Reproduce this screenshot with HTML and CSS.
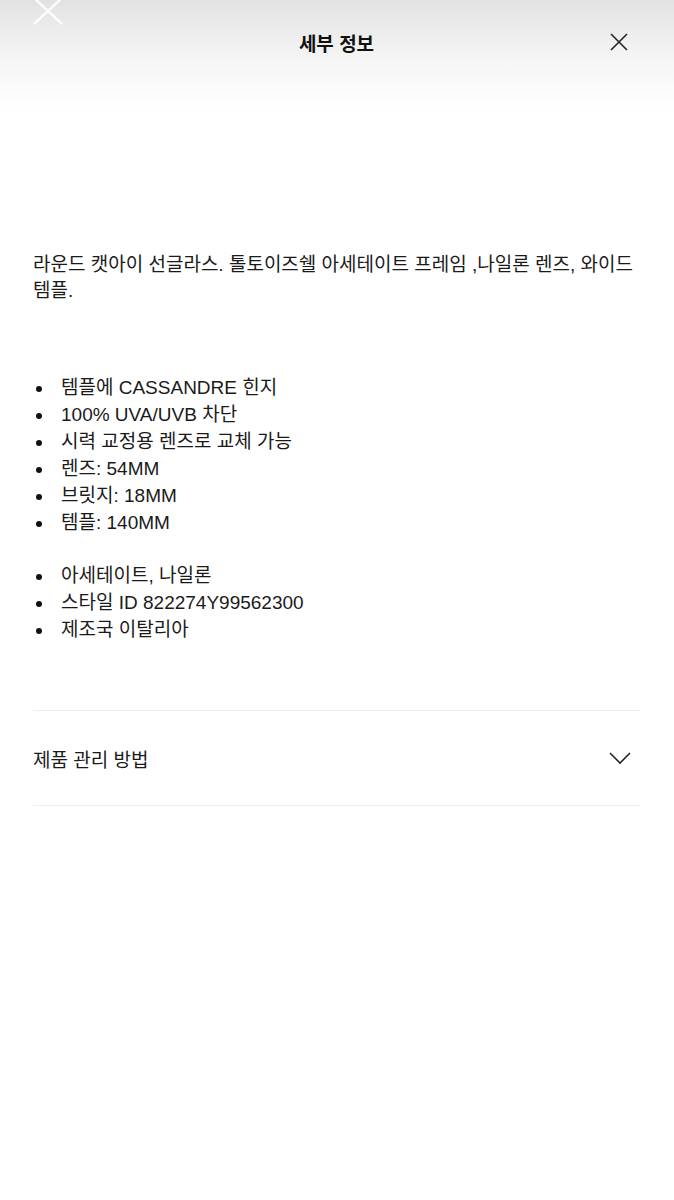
FILE: index.html
```html
<!DOCTYPE html>
<html lang="ko">
<head>
    <meta charset="UTF-8">
    <meta name="viewport" content="width=device-width, initial-scale=1.0">
    <title>세부 정보</title>
    <link rel="stylesheet" href="styles.css">
</head>
<body>
    <div class="ghost-close">
        <svg width="32" height="30" viewBox="0 0 32 30"><path d="M2 -2L30 24M30 -2L2 24" stroke="#fff" stroke-width="2.4" fill="none"/></svg>
    </div>
    <div class="sheet">
        <header class="sheet-header">
            <h1>세부 정보</h1>
            <button class="close">
                <svg width="20" height="20" viewBox="0 0 20 20"><path d="M2 2L18 18M18 2L2 18" stroke="#222" stroke-width="1.6" fill="none"/></svg>
            </button>
        </header>

        <p class="desc">라운드 캣아이 선글라스. 톨토이즈쉘 아세테이트 프레임 ,나일론 렌즈, 와이드 템플.</p>

        <ul class="specs">
            <li>템플에 CASSANDRE 힌지</li>
            <li>100% UVA/UVB 차단</li>
            <li>시력 교정용 렌즈로 교체 가능</li>
            <li>렌즈: 54MM</li>
            <li>브릿지: 18MM</li>
            <li>템플: 140MM</li>
        </ul>
        <ul class="specs">
            <li>아세테이트, 나일론</li>
            <li>스타일 ID 822274Y99562300</li>
            <li>제조국 이탈리아</li>
        </ul>

        <div class="accordion">
            <span>제품 관리 방법</span>
            <svg width="22" height="14" viewBox="0 0 22 14"><path d="M1 2L11 12L21 2" stroke="#222" stroke-width="1.6" fill="none"/></svg>
        </div>
    </div>
</body>
</html>
```

FILE: styles.css
```css
body {
    margin: 0;
    font-family: 'Liberation Sans', 'Noto Sans CJK KR', sans-serif;
    color: #1a1a1a;
    background: linear-gradient(180deg, #e2e2e2 0px, #f4f4f4 55px, #fff 110px);
    min-height: 1200px;
    position: relative;
}
.ghost-close {
    position: absolute;
    top: 0;
    left: 32px;
    opacity: 0.9;
}
.sheet {
    padding: 0 34px 0 33px;
}
.sheet-header {
    height: 84px;
    display: flex;
    align-items: center;
    justify-content: center;
    position: relative;
}
.sheet-header h1 {
    margin: 0;
    font-size: 19px;
    font-weight: bold;
    color: #111;
}
.close {
    position: absolute;
    right: 11px;
    top: 32px;
    background: none;
    border: none;
    padding: 0;
    line-height: 0;
}
.desc {
    margin: 168px 0 0;
    font-size: 19px;
    line-height: 26px;
}
.specs {
    list-style: none;
    margin: 70px 0 0;
    padding: 0;
    font-size: 19px;
    line-height: 27px;
}
.specs + .specs {
    margin-top: 26px;
}
.specs li {
    position: relative;
    padding-left: 28px;
}
.specs li::before {
    content: '';
    position: absolute;
    left: 3px;
    top: 12px;
    width: 6px;
    height: 6px;
    border-radius: 50%;
    background: #111;
}
.accordion {
    margin-top: 67px;
    border-top: 1px solid #eeeeee;
    border-bottom: 1px solid #eeeeee;
    height: 94px;
    display: flex;
    align-items: center;
    justify-content: space-between;
    font-size: 19px;
    padding-right: 9px;
}
```
